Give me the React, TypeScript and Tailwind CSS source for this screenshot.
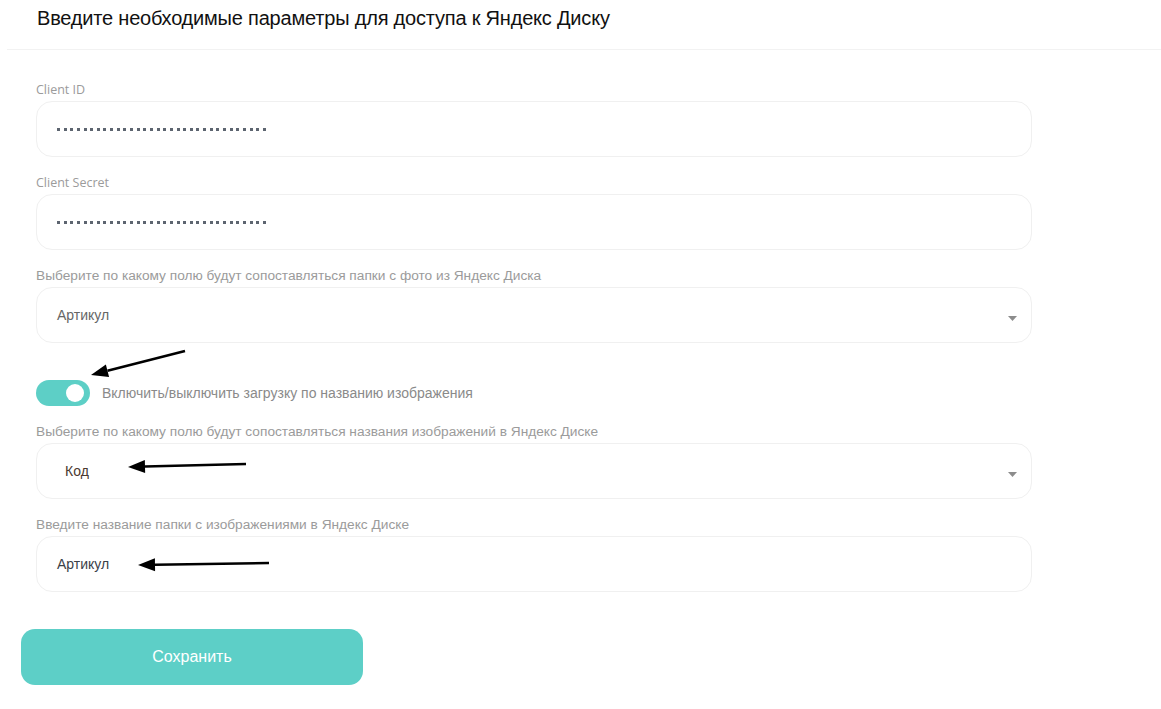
import React from 'react';

const font = { fontFamily: '"Liberation Sans", Arial, sans-serif' };

function Dots() {
  return (
    <div className="flex items-center gap-[3.65px]">
      {Array.from({ length: 32 }).map((_, i) => (
        <span key={i} className="block w-[3px] h-[3px] bg-[#5d6570]" />
      ))}
    </div>
  );
}

function Label({ children, sans }: { children: React.ReactNode; sans?: boolean }) {
  return (
    <div
      className={`leading-[16px] text-[#9b9b9b] mb-[3px] ${sans ? 'font-["Open_Sans",sans-serif] text-[12.5px]' : 'text-[13.7px]'}`}
    >
      {children}
    </div>
  );
}

function Box({ children, caret }: { children: React.ReactNode; caret?: boolean }) {
  return (
    <div className="w-[996px] h-[56px] rounded-[16px] border border-[#f0f0f0] bg-white flex items-center justify-between px-[20px]">
      <div className="flex items-center">{children}</div>
      {caret && (
        <svg width="9" height="5" viewBox="0 0 9 5" className="mr-[-6px] mt-[6px]">
          <path d="M0 0h9L4.5 5z" fill="#8c8c8c" />
        </svg>
      )}
    </div>
  );
}

function Arrow({ x1, y1, x2, y2 }: { x1: number; y1: number; x2: number; y2: number }) {
  const ang = Math.atan2(y2 - y1, x2 - x1);
  const len = 17;
  const w = 6.5;
  const bx = x2 - len * Math.cos(ang);
  const by = y2 - len * Math.sin(ang);
  const px = -Math.sin(ang) * w;
  const py = Math.cos(ang) * w;
  return (
    <g>
      <line x1={x1} y1={y1} x2={bx} y2={by} stroke="#000" strokeWidth="2.5" />
      <polygon points={`${x2},${y2} ${bx + px},${by + py} ${bx - px},${by - py}`} fill="#000" />
    </g>
  );
}

export default function App() {
  return (
    <div className="relative w-[1161px] h-[709px] bg-white overflow-hidden" style={font}>
      <div className="h-[50px] ml-[7px] border-b border-[#f2f2f2] pl-[30px] pt-[6px]">
        <h1 className="text-[20px] leading-[24px] text-[#111] tracking-[-0.2px]">
          Введите необходимые параметры для доступа к Яндекс Диску
        </h1>
      </div>

      <div className="pl-[36px] pt-[32px]">
        <Label sans>Client ID</Label>
        <Box>
          <Dots />
        </Box>

        <div className="mt-[18px]">
          <Label sans>Client Secret</Label>
          <Box>
            <Dots />
          </Box>
        </div>

        <div className="mt-[18px]">
          <Label>Выберите по какому полю будут сопоставляться папки с фото из Яндекс Диска</Label>
          <Box caret>
            <span className="text-[14px] text-[#666]">Артикул</span>
          </Box>
        </div>

        <div className="mt-[37px] flex items-center gap-[12px]">
          <div className="w-[54px] h-[26px] rounded-full bg-[#5dcfc6] flex items-center justify-end pr-[6px]">
            <span className="block w-[18px] h-[18px] rounded-full bg-white" />
          </div>
          <span className="text-[14px] text-[#8a8a8a]">Включить/выключить загрузку по названию изображения</span>
        </div>

        <div className="mt-[18px]">
          <Label>Выберите по какому полю будут сопоставляться названия изображений в Яндекс Диске</Label>
          <Box caret>
            <span className="text-[14px] text-[#4a3a30] ml-[8px]">Код</span>
          </Box>
        </div>

        <div className="mt-[18px]">
          <Label>Введите название папки с изображениями в Яндекс Диске</Label>
          <Box>
            <span className="text-[14px] text-[#3b4148]">Артикул</span>
          </Box>
        </div>
      </div>

      <div className="pl-[21px] pt-[37px]">
        <button className="w-[342px] h-[56px] rounded-[14px] bg-[#5dcfc7] text-white text-[16px]">
          Сохранить
        </button>
      </div>

      <svg className="absolute left-0 top-0 pointer-events-none" width="1161" height="709">
        <Arrow x1={185} y1={351} x2={91} y2={375} />
        <Arrow x1={246} y1={464} x2={128} y2={467} />
        <Arrow x1={269} y1={563} x2={138} y2={565} />
      </svg>
    </div>
  );
}
